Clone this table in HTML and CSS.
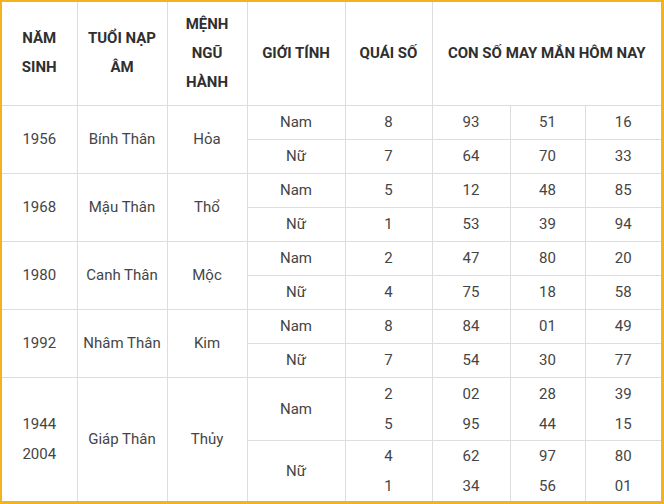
FILE: index.html
```html
<!DOCTYPE html>
<html lang="vi">
<head>
<meta charset="utf-8">
<title>Con số may mắn</title>
<link rel="stylesheet" href="styles.css">
</head>
<body>
<div class="frame">
<table class="lucky">
<colgroup>
<col class="c1"><col class="c2"><col class="c3"><col class="c4"><col class="c5"><col class="c6"><col class="c7"><col class="c8">
</colgroup>
<thead>
<tr class="head">
<th>NĂM SINH</th><th>TUỔI NẠP ÂM</th><th>MỆNH NGŨ HÀNH</th><th>GIỚI TÍNH</th><th>QUÁI SỐ</th><th colspan="3">CON SỐ MAY MẮN HÔM NAY</th>
</tr>
</thead>
<tbody>
<tr class="r"><td rowspan="2">1956</td><td rowspan="2">Bính Thân</td><td rowspan="2">Hỏa</td><td>Nam</td><td>8</td><td>93</td><td>51</td><td>16</td></tr>
<tr class="r"><td>Nữ</td><td>7</td><td>64</td><td>70</td><td>33</td></tr>
<tr class="r"><td rowspan="2">1968</td><td rowspan="2">Mậu Thân</td><td rowspan="2">Thổ</td><td>Nam</td><td>5</td><td>12</td><td>48</td><td>85</td></tr>
<tr class="r"><td>Nữ</td><td>1</td><td>53</td><td>39</td><td>94</td></tr>
<tr class="r"><td rowspan="2">1980</td><td rowspan="2">Canh Thân</td><td rowspan="2">Mộc</td><td>Nam</td><td>2</td><td>47</td><td>80</td><td>20</td></tr>
<tr class="r"><td>Nữ</td><td>4</td><td>75</td><td>18</td><td>58</td></tr>
<tr class="r"><td rowspan="2">1992</td><td rowspan="2">Nhâm Thân</td><td rowspan="2">Kim</td><td>Nam</td><td>8</td><td>84</td><td>01</td><td>49</td></tr>
<tr class="r"><td>Nữ</td><td>7</td><td>54</td><td>30</td><td>77</td></tr>
<tr class="r2a"><td rowspan="2">1944<br>2004</td><td rowspan="2">Giáp Thân</td><td rowspan="2">Thủy</td><td>Nam</td><td>2<br>5</td><td>02<br>95</td><td>28<br>44</td><td>39<br>15</td></tr>
<tr class="r2b"><td>Nữ</td><td>4<br>1</td><td>62<br>34</td><td>97<br>56</td><td>80<br>01</td></tr>
</tbody>
</table>
</div>
</body>
</html>
```
FILE: styles.css
```css
html, body {
  margin: 0;
  padding: 0;
  background: #ffffff;
}
.frame {
  width: 664px;
  height: 504px;
  box-sizing: border-box;
  border-style: solid;
  border-color: #f4b31b;
  border-width: 2px 3px 3px 2px;
  background: #ffffff;
  overflow: hidden;
}
.lucky {
  width: 659px;
  border-collapse: collapse;
  border-style: hidden;
  table-layout: fixed;
  font-family: Roboto, "Liberation Sans", sans-serif;
  font-size: 15px;
  color: #454545;
}
.c1 { width: 75px; }
.c2 { width: 90px; }
.c3 { width: 80px; }
.c4 { width: 98px; }
.c5 { width: 87px; }
.c6 { width: 78px; }
.c7 { width: 75px; }
.c8 { width: 76px; }
.lucky th,
.lucky td {
  border: 1px solid #dddddd;
  padding: 0 2px;
  text-align: center;
  vertical-align: middle;
  line-height: 30px;
}
.lucky th {
  padding: 0 8px;
  font-weight: 700;
  color: #2f2f2f;
  line-height: 29px;
}
.head { height: 103px; }
.r { height: 34px; }
.r2a { height: 63px; }
.r2b { height: 61px; }
```
